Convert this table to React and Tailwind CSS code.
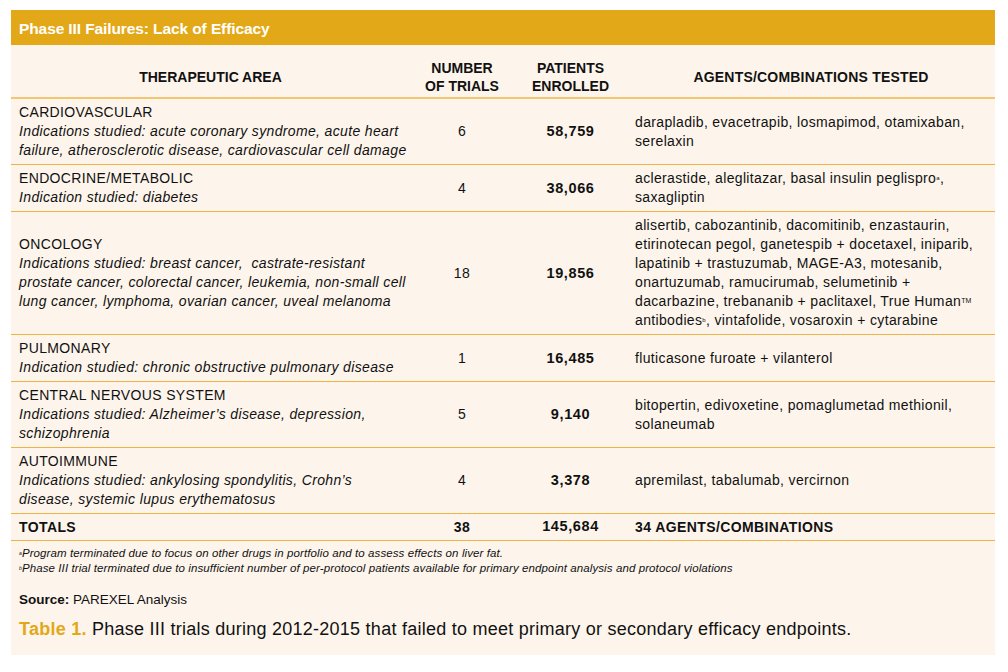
const rows = [
  {
    area: 'CARDIOVASCULAR',
    ind: ['Indications studied: acute coronary syndrome, acute heart', 'failure, atherosclerotic disease, cardiovascular cell damage'],
    trials: '6',
    patients: '58,759',
    agents: [<>darapladib, evacetrapib, losmapimod, otamixaban,</>, <>serelaxin</>],
  },
  {
    area: 'ENDOCRINE/METABOLIC',
    ind: ['Indication studied: diabetes'],
    trials: '4',
    patients: '38,066',
    agents: [
      <>aclerastide, aleglitazar, basal insulin peglispro<sup className="text-[6px]">a</sup>,</>,
      <>saxagliptin</>,
    ],
  },
  {
    area: 'ONCOLOGY',
    ind: [
      'Indications studied: breast cancer,\u00a0 castrate-resistant',
      'prostate cancer, colorectal cancer, leukemia, non-small cell',
      'lung cancer, lymphoma, ovarian cancer, uveal melanoma',
    ],
    trials: '18',
    patients: '19,856',
    agents: [
      <>alisertib, cabozantinib, dacomitinib, enzastaurin,</>,
      <>etirinotecan pegol, ganetespib + docetaxel, iniparib,</>,
      <>lapatinib + trastuzumab, MAGE-A3, motesanib,</>,
      <>onartuzumab, ramucirumab, selumetinib +</>,
      <>dacarbazine, trebananib + paclitaxel, True Human<sup className="text-[7px] tracking-normal">TM</sup></>,
      <>antibodies<sup className="text-[6px]">b</sup>, vintafolide, vosaroxin + cytarabine</>,
    ],
  },
  {
    area: 'PULMONARY',
    ind: ['Indication studied: chronic obstructive pulmonary disease'],
    trials: '1',
    patients: '16,485',
    agents: [<>fluticasone furoate + vilanterol</>],
  },
  {
    area: 'CENTRAL NERVOUS SYSTEM',
    ind: ['Indications studied: Alzheimer\u2019s disease, depression,', 'schizophrenia'],
    trials: '5',
    patients: '9,140',
    agents: [<>bitopertin, edivoxetine, pomaglumetad methionil,</>, <>solaneumab</>],
  },
  {
    area: 'AUTOIMMUNE',
    ind: ['Indications studied: ankylosing spondylitis, Crohn\u2019s', 'disease, systemic lupus erythematosus'],
    trials: '4',
    patients: '3,378',
    agents: [<>apremilast, tabalumab, vercirnon</>],
  },
]

function App() {
  return (
    <div className="w-[1008px] h-[672px] bg-white pt-[10px] pl-[11px] font-['Liberation_Sans',Arial,sans-serif] text-[#111]">
      <div className="w-[984px] h-[645px] bg-[#fdf5ec]">
        <div className="h-[35px] bg-[#e3a817] flex items-center px-[8px] pt-[3px]">
          <span className="text-white font-bold text-[15.5px] tracking-[-0.1px]">Phase III Failures: Lack of Efficacy</span>
        </div>

        <div className="grid grid-cols-[399px_104px_113px_1fr] h-[54px] pt-[14px] pb-[4px] items-center border-b-2 border-[#f3c772] text-[14px] font-bold leading-[18px] text-center">
          <div>THERAPEUTIC AREA</div>
          <div>NUMBER<br />OF TRIALS</div>
          <div>PATIENTS<br />ENROLLED</div>
          <div className="tracking-[0.2px]">AGENTS/COMBINATIONS TESTED</div>
        </div>

        {rows.map((r) => (
          <div
            key={r.area}
            className="grid grid-cols-[399px_104px_113px_1fr] items-center border-b border-[#ebb444] py-[4px] text-[14px] leading-[19px] tracking-[0.35px] whitespace-nowrap"
          >
            <div className="pl-[8px]">
              <div>{r.area}</div>
              {r.ind.map((l, i) => (
                <div key={i} className="italic">{l}</div>
              ))}
            </div>
            <div className="text-center">{r.trials}</div>
            <div className="text-center font-bold text-[14.5px] tracking-[0.6px]">{r.patients}</div>
            <div className="pl-[8px]">
              {r.agents.map((l, i) => (
                <div key={i}>{l}</div>
              ))}
            </div>
          </div>
        ))}

        <div className="grid grid-cols-[399px_104px_113px_1fr] items-center h-[27px] border-b border-[#ebb444] text-[14px] font-bold tracking-[0.4px]">
          <div className="pl-[8px]">TOTALS</div>
          <div className="text-center">38</div>
          <div className="text-center text-[14.5px] tracking-[0.6px]">145,684</div>
          <div className="pl-[8px]">34 AGENTS/COMBINATIONS</div>
        </div>

        <div className="px-[8px] pt-[5px] text-[11.5px] italic leading-[15px] tracking-[0.1px] whitespace-nowrap">
          <div><sup className="text-[5px]">a</sup>Program terminated due to focus on other drugs in portfolio and to assess effects on liver fat.</div>
          <div><sup className="text-[5px]">b</sup>Phase III trial terminated due to insufficient number of per-protocol patients available for primary endpoint analysis and protocol violations</div>
        </div>

        <div className="px-[8px] pt-[14px] text-[13.5px]">
          <span className="font-bold">Source:</span> PAREXEL Analysis
        </div>

        <div className="px-[8px] pt-[6px] text-[18px] tracking-[0.25px] whitespace-nowrap">
          <span className="font-bold text-[#e3a817]">Table 1.</span> Phase III trials during 2012-2015 that failed to meet primary or secondary efficacy endpoints.
        </div>
      </div>
    </div>
  )
}

export default App
